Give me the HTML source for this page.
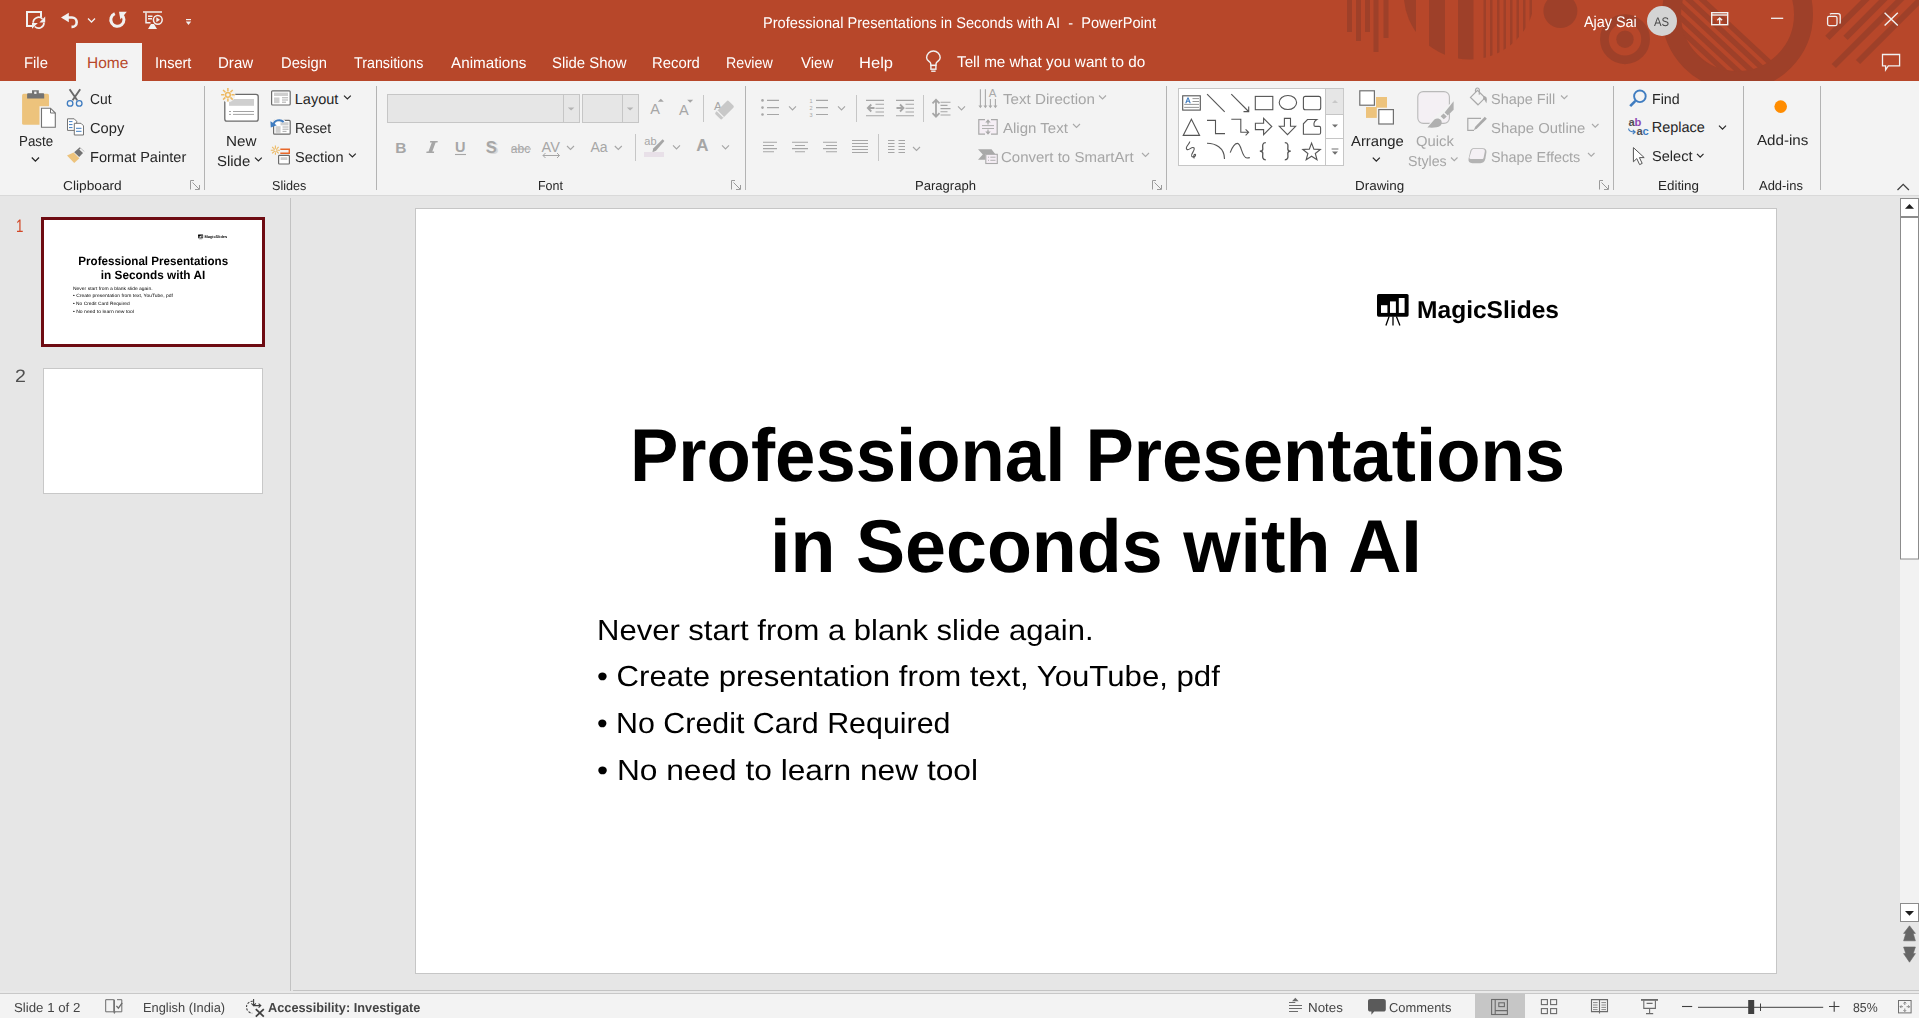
<!DOCTYPE html>
<html><head><meta charset="utf-8"><style>
html,body{margin:0;padding:0;width:1919px;height:1018px;overflow:hidden;background:#E6E6E6;font-family:"Liberation Sans",sans-serif;}
.t{position:absolute;white-space:pre;transform-origin:0 0;text-rendering:geometricPrecision;}
.r{position:absolute;display:block;}
svg{overflow:visible}
</style></head><body>
<div class="r" style="left:0px;top:0px;width:1919px;height:81px;background:#B7472A;"></div>
<svg class="r" style="left:0;top:0" width="1919" height="81" viewBox="0 0 1919 81"><g fill="#9E4029"><rect x="1347" y="0" width="5" height="32"/><rect x="1356" y="0" width="5" height="41"/><rect x="1365" y="0" width="5" height="32"/><rect x="1373.5" y="0" width="5.0" height="52"/><rect x="1383.5" y="0" width="5.0" height="38"/><defs><clipPath id="c1"><circle cx="1469.5" cy="-6.3" r="65.8"/></clipPath><clipPath id="c2"><circle cx="1737.5" cy="14.5" r="57.5"/></clipPath><clipPath id="tb"><rect x="0" y="0" width="1919" height="81"/></clipPath></defs><g clip-path="url(#c1)"><rect x="1400" y="-80" width="16" height="160"/><rect x="1429" y="-80" width="16" height="160"/><rect x="1458" y="-80" width="15.5" height="160"/><rect x="1483.5" y="-80" width="2.5" height="160"/><rect x="1490" y="-80" width="2.5" height="160"/><rect x="1497" y="-80" width="2.5" height="160"/><rect x="1503.5" y="-80" width="2.5" height="160"/><rect x="1510" y="-80" width="2.5" height="160"/><rect x="1516.5" y="-80" width="2.5" height="160"/><rect x="1523" y="-80" width="2.5" height="160"/><rect x="1529.5" y="-80" width="2.5" height="160"/></g><circle cx="1560.4" cy="11" r="17"/><circle cx="1625" cy="39.2" r="20.6" fill="none" stroke="#9E4029" stroke-width="8.7"/><circle cx="1625" cy="39.2" r="8.7"/><g clip-path="url(#tb)"><circle cx="1737.5" cy="14.5" r="66" fill="none" stroke="#9E4029" stroke-width="19"/><g clip-path="url(#c2)"><line x1="1582.5" y1="-111.60000000000001" x2="1822.5" y2="111.60000000000001" stroke="#9E4029" stroke-width="5.3"/><line x1="1568.9" y1="-111.60000000000001" x2="1808.9" y2="111.60000000000001" stroke="#9E4029" stroke-width="5.3"/><line x1="1555.3" y1="-111.60000000000001" x2="1795.3" y2="111.60000000000001" stroke="#9E4029" stroke-width="5.3"/><line x1="1541.7" y1="-111.60000000000001" x2="1781.7" y2="111.60000000000001" stroke="#9E4029" stroke-width="5.3"/><line x1="1528.1" y1="-111.60000000000001" x2="1768.1" y2="111.60000000000001" stroke="#9E4029" stroke-width="5.3"/><line x1="1514.5" y1="-111.60000000000001" x2="1754.5" y2="111.60000000000001" stroke="#9E4029" stroke-width="5.3"/></g><line x1="1827.4" y1="37.9" x2="1875" y2="-9.7" stroke="#9E4029" stroke-width="6"/><line x1="1845.5" y1="37.9" x2="1893" y2="-9.7" stroke="#9E4029" stroke-width="6"/><line x1="1833.8" y1="66" x2="1910" y2="-10" stroke="#9E4029" stroke-width="6"/><line x1="1858" y1="62" x2="1930" y2="-10" stroke="#9E4029" stroke-width="6"/></g></g></svg>
<div class="t" style="left:763.06px;top:16.00px;font-size:15.5px;line-height:15.5px;color:#FFFFFF;transform:scaleX(0.9423);">Professional Presentations in Seconds with AI  -  PowerPoint</div>
<div class="t" style="left:1583.50px;top:15.00px;font-size:15.5px;line-height:15.5px;color:#FFFFFF;transform:scaleX(0.9286);">Ajay Sai</div>
<div class="r" style="left:1647px;top:6px;width:30px;height:30px;border-radius:50%;background:#D4D4D4"></div>
<div class="t" style="left:1654.00px;top:16.17px;font-size:12.5px;line-height:12.5px;color:#4A4A4A;transform:scaleX(0.9062);">AS</div>
<div class="t" style="left:24.04px;top:56.00px;font-size:15.5px;line-height:15.5px;color:#FFFFFF;transform:scaleX(0.9565);">File</div>
<div class="t" style="left:155.06px;top:56.00px;font-size:15.5px;line-height:15.5px;color:#FFFFFF;transform:scaleX(0.9395);">Insert</div>
<div class="t" style="left:218.43px;top:56.00px;font-size:15.5px;line-height:15.5px;color:#FFFFFF;transform:scaleX(0.9714);">Draw</div>
<div class="t" style="left:280.75px;top:56.00px;font-size:15.5px;line-height:15.5px;color:#FFFFFF;transform:scaleX(0.9511);">Design</div>
<div class="t" style="left:354.40px;top:56.00px;font-size:15.5px;line-height:15.5px;color:#FFFFFF;transform:scaleX(0.9213);">Transitions</div>
<div class="t" style="left:451.30px;top:56.00px;font-size:15.5px;line-height:15.5px;color:#FFFFFF;transform:scaleX(0.9829);">Animations</div>
<div class="t" style="left:552.04px;top:56.00px;font-size:15.5px;line-height:15.5px;color:#FFFFFF;transform:scaleX(0.9605);">Slide Show</div>
<div class="t" style="left:652.04px;top:56.00px;font-size:15.5px;line-height:15.5px;color:#FFFFFF;transform:scaleX(0.9583);">Record</div>
<div class="t" style="left:726.08px;top:56.00px;font-size:15.5px;line-height:15.5px;color:#FFFFFF;transform:scaleX(0.9200);">Review</div>
<div class="t" style="left:801.00px;top:56.00px;font-size:15.5px;line-height:15.5px;color:#FFFFFF;transform:scaleX(0.9697);">View</div>
<div class="t" style="left:858.93px;top:56.00px;font-size:15.5px;line-height:15.5px;color:#FFFFFF;transform:scaleX(1.0667);">Help</div>
<div class="r" style="left:76px;top:43px;width:66px;height:38px;background:#F3F3F3;"></div>
<div class="t" style="left:87.00px;top:56.00px;font-size:15.5px;line-height:15.5px;color:#B7472A;">Home</div>
<div class="t" style="left:957.00px;top:55.00px;font-size:15.5px;line-height:15.5px;color:#FFFFFF;transform:scaleX(0.9843);">Tell me what you want to do</div>
<div class="r" style="left:0px;top:81px;width:1919px;height:114px;background:#F3F3F3;"></div>
<div class="r" style="left:0px;top:195px;width:1919px;height:1px;background:#D9D9D9;"></div>
<div class="r" style="left:204px;top:86px;width:1px;height:104px;background:#B3B3B3;"></div>
<div class="r" style="left:376px;top:86px;width:1px;height:104px;background:#B3B3B3;"></div>
<div class="r" style="left:745px;top:86px;width:1px;height:104px;background:#B3B3B3;"></div>
<div class="r" style="left:1166px;top:86px;width:1px;height:104px;background:#B3B3B3;"></div>
<div class="r" style="left:1613px;top:86px;width:1px;height:104px;background:#B3B3B3;"></div>
<div class="r" style="left:1743px;top:86px;width:1px;height:104px;background:#B3B3B3;"></div>
<div class="r" style="left:1820px;top:86px;width:1px;height:104px;background:#B3B3B3;"></div>
<div class="t" style="left:62.54px;top:179.36px;font-size:13px;line-height:13px;color:#262626;transform:scaleX(1.0556);">Clipboard</div>
<div class="t" style="left:272.43px;top:179.36px;font-size:13px;line-height:13px;color:#262626;transform:scaleX(0.9706);">Slides</div>
<div class="t" style="left:537.64px;top:179.36px;font-size:13px;line-height:13px;color:#262626;transform:scaleX(0.9600);">Font</div>
<div class="t" style="left:914.80px;top:179.36px;font-size:13px;line-height:13px;color:#262626;transform:scaleX(1.0034);">Paragraph</div>
<div class="t" style="left:1355.27px;top:179.36px;font-size:13px;line-height:13px;color:#262626;transform:scaleX(1.0326);">Drawing</div>
<div class="t" style="left:1657.57px;top:179.36px;font-size:13px;line-height:13px;color:#262626;transform:scaleX(1.0316);">Editing</div>
<div class="t" style="left:1759.40px;top:179.36px;font-size:13px;line-height:13px;color:#262626;transform:scaleX(0.9955);">Add-ins</div>
<div class="t" style="left:18.78px;top:134.51px;font-size:14.5px;line-height:14.5px;color:#262626;transform:scaleX(0.9194);">Paste</div>
<div class="t" style="left:89.65px;top:93.11px;font-size:14.5px;line-height:14.5px;color:#262626;transform:scaleX(0.9545);">Cut</div>
<div class="t" style="left:89.59px;top:121.61px;font-size:14.5px;line-height:14.5px;color:#262626;transform:scaleX(1.0121);">Copy</div>
<div class="t" style="left:89.60px;top:150.51px;font-size:14.5px;line-height:14.5px;color:#262626;transform:scaleX(1.0042);">Format Painter</div>
<div class="t" style="left:225.55px;top:134.51px;font-size:14.5px;line-height:14.5px;color:#262626;transform:scaleX(1.0500);">New</div>
<div class="t" style="left:216.67px;top:154.61px;font-size:14.5px;line-height:14.5px;color:#262626;transform:scaleX(1.0290);">Slide</div>
<div class="t" style="left:294.80px;top:93.11px;font-size:14.5px;line-height:14.5px;color:#262626;">Layout</div>
<div class="t" style="left:294.85px;top:121.61px;font-size:14.5px;line-height:14.5px;color:#262626;transform:scaleX(0.9514);">Reset</div>
<div class="t" style="left:294.80px;top:150.51px;font-size:14.5px;line-height:14.5px;color:#262626;transform:scaleX(1.0043);">Section</div>
<div class="t" style="left:1002.50px;top:93.11px;font-size:14.5px;line-height:14.5px;color:#A6A6A6;transform:scaleX(1.0460);">Text Direction</div>
<div class="t" style="left:1002.50px;top:121.61px;font-size:14.5px;line-height:14.5px;color:#A6A6A6;transform:scaleX(1.0365);">Align Text</div>
<div class="t" style="left:1001.47px;top:150.51px;font-size:14.5px;line-height:14.5px;color:#A6A6A6;transform:scaleX(1.0346);">Convert to SmartArt</div>
<div class="t" style="left:1350.50px;top:134.81px;font-size:14.5px;line-height:14.5px;color:#262626;transform:scaleX(1.0235);">Arrange</div>
<div class="t" style="left:1415.58px;top:134.81px;font-size:14.5px;line-height:14.5px;color:#A6A6A6;transform:scaleX(1.0222);">Quick</div>
<div class="t" style="left:1407.62px;top:154.51px;font-size:14.5px;line-height:14.5px;color:#A6A6A6;transform:scaleX(0.9789);">Styles</div>
<div class="t" style="left:1490.70px;top:93.11px;font-size:14.5px;line-height:14.5px;color:#A6A6A6;transform:scaleX(0.9968);">Shape Fill</div>
<div class="t" style="left:1490.67px;top:121.61px;font-size:14.5px;line-height:14.5px;color:#A6A6A6;transform:scaleX(1.0256);">Shape Outline</div>
<div class="t" style="left:1490.71px;top:150.51px;font-size:14.5px;line-height:14.5px;color:#A6A6A6;transform:scaleX(0.9921);">Shape Effects</div>
<div class="t" style="left:1651.72px;top:92.91px;font-size:14.5px;line-height:14.5px;color:#262626;transform:scaleX(0.9815);">Find</div>
<div class="t" style="left:1651.70px;top:121.41px;font-size:14.5px;line-height:14.5px;color:#262626;">Replace</div>
<div class="t" style="left:1651.69px;top:150.41px;font-size:14.5px;line-height:14.5px;color:#262626;transform:scaleX(1.0077);">Select</div>
<div class="t" style="left:1756.50px;top:134.31px;font-size:14.5px;line-height:14.5px;color:#262626;transform:scaleX(1.0449);">Add-ins</div>
<div class="r" style="left:0px;top:196px;width:1919px;height:794px;background:#E6E6E6;"></div>
<div class="r" style="left:290px;top:198px;width:1px;height:793px;background:#C2C2C2;"></div>
<div class="t" style="left:15.96px;top:216.90px;font-size:18px;line-height:18px;color:#D24726;transform:scaleX(0.7375);">1</div>
<div class="t" style="left:14.51px;top:366.80px;font-size:18px;line-height:18px;color:#505050;transform:scaleX(1.0875);">2</div>
<div class="r" style="left:41px;top:217px;width:224px;height:130px;background:#6E0B12;"></div>
<div class="r" style="left:44px;top:220px;width:218px;height:124px;background:#FFFFFF;"></div>
<div class="r" style="left:44px;top:369px;width:218px;height:124px;background:#FFFFFF;box-shadow:0 0 0 1px #C8C8C8;"></div>
<div class="r" style="left:416px;top:209px;width:1360px;height:764px;background:#FFFFFF;box-shadow:0 0 0 1px #C6C6C6;"></div>
<div class="r" style="left:416px;top:209px;width:1360px;height:764px;overflow:hidden"><div class="t" style="left:213.76px;top:208.60px;font-size:75px;line-height:75px;color:#000000;font-weight:bold;transform:scaleX(0.9670);">Professional Presentations</div><div class="t" style="left:354.09px;top:300.40px;font-size:75px;line-height:75px;color:#000000;font-weight:bold;transform:scaleX(0.9817);">in Seconds with AI</div><div class="t" style="left:180.86px;top:408.00px;font-size:29px;line-height:29px;color:#000000;transform:scaleX(1.0696);">Never start from a blank slide again.</div><div class="t" style="left:180.93px;top:454.20px;font-size:29px;line-height:29px;color:#000000;transform:scaleX(1.0743);">• Create presentation from text, YouTube, pdf</div><div class="t" style="left:180.95px;top:501.20px;font-size:29px;line-height:29px;color:#000000;transform:scaleX(1.0478);">• No Credit Card Required</div><div class="t" style="left:180.91px;top:548.30px;font-size:29px;line-height:29px;color:#000000;transform:scaleX(1.0925);">• No need to learn new tool</div><div class="t" style="left:1001.39px;top:90.20px;font-size:24.4px;line-height:24.4px;color:#000000;font-weight:bold;transform:scaleX(1.0072);">MagicSlides</div><svg class="r" style="left:960.5999999999999px;top:85.10000000000002px;overflow:visible" width="32" height="32" viewBox="0 0 32 32"><rect x="0" y="0" width="31.6" height="22.7" rx="1.6" fill="#000"/><rect x="4" y="11.2" width="6.4" height="7.7" fill="#fff"/><rect x="13" y="7.4" width="5.9" height="11.5" fill="#fff"/><rect x="21.8" y="4" width="5.8" height="14.9" fill="#fff"/><path d="M12.1 22.5L8.9 31.5M16 22.5V31.5M19.4 22.5L22.9 31.5" stroke="#000" stroke-width="1.3" fill="none"/></svg></div>
<div class="r" style="left:44px;top:221px;width:1360px;height:764px;overflow:hidden;transform:scale(0.16029);transform-origin:0 0"><div class="t" style="left:213.76px;top:208.60px;font-size:75px;line-height:75px;color:#000000;font-weight:bold;transform:scaleX(0.9670);">Professional Presentations</div><div class="t" style="left:354.09px;top:300.40px;font-size:75px;line-height:75px;color:#000000;font-weight:bold;transform:scaleX(0.9817);">in Seconds with AI</div><div class="t" style="left:180.86px;top:408.00px;font-size:29px;line-height:29px;color:#000000;transform:scaleX(1.0696);">Never start from a blank slide again.</div><div class="t" style="left:180.93px;top:454.20px;font-size:29px;line-height:29px;color:#000000;transform:scaleX(1.0743);">• Create presentation from text, YouTube, pdf</div><div class="t" style="left:180.95px;top:501.20px;font-size:29px;line-height:29px;color:#000000;transform:scaleX(1.0478);">• No Credit Card Required</div><div class="t" style="left:180.91px;top:548.30px;font-size:29px;line-height:29px;color:#000000;transform:scaleX(1.0925);">• No need to learn new tool</div><div class="t" style="left:1001.39px;top:90.20px;font-size:24.4px;line-height:24.4px;color:#000000;font-weight:bold;transform:scaleX(1.0072);">MagicSlides</div><svg class="r" style="left:960.5999999999999px;top:85.10000000000002px;overflow:visible" width="32" height="32" viewBox="0 0 32 32"><rect x="0" y="0" width="31.6" height="22.7" rx="1.6" fill="#000"/><rect x="4" y="11.2" width="6.4" height="7.7" fill="#fff"/><rect x="13" y="7.4" width="5.9" height="11.5" fill="#fff"/><rect x="21.8" y="4" width="5.8" height="14.9" fill="#fff"/><path d="M12.1 22.5L8.9 31.5M16 22.5V31.5M19.4 22.5L22.9 31.5" stroke="#000" stroke-width="1.3" fill="none"/></svg></div>
<div class="r" style="left:1900px;top:198px;width:19px;height:724px;background:#F2F2F2;"></div>
<div class="r" style="left:0px;top:991px;width:1919px;height:2px;background:#E9E9E9;"></div>
<div class="r" style="left:293px;top:990px;width:1626px;height:1px;background:#C4C4C4;"></div>
<div class="r" style="left:0px;top:993px;width:1919px;height:1px;background:#C8C8C8;"></div>
<div class="r" style="left:0px;top:994px;width:1919px;height:24px;background:#F3F3F3;"></div>
<div class="t" style="left:14.18px;top:1000.76px;font-size:13px;line-height:13px;color:#444444;transform:scaleX(1.0203);">Slide 1 of 2</div>
<div class="t" style="left:143.31px;top:1000.76px;font-size:13px;line-height:13px;color:#444444;transform:scaleX(0.9877);">English (India)</div>
<div class="t" style="left:268.00px;top:1000.60px;font-size:13px;line-height:13px;color:#444444;font-weight:bold;transform:scaleX(0.9806);">Accessibility: Investigate</div>
<div class="t" style="left:1307.57px;top:1001.16px;font-size:13px;line-height:13px;color:#444444;transform:scaleX(1.0273);">Notes</div>
<div class="t" style="left:1388.81px;top:1001.16px;font-size:13px;line-height:13px;color:#444444;transform:scaleX(0.9918);">Comments</div>
<div class="r" style="left:1475px;top:994px;width:50px;height:24px;background:#C6C6C6;"></div>
<div class="t" style="left:1853.35px;top:1000.86px;font-size:13px;line-height:13px;color:#444444;transform:scaleX(0.9480);">85%</div>
<svg class="r" style="left:0;top:0" width="1919" height="1018" viewBox="0 0 1919 1018"><g fill="none" stroke="#F1F1F1" stroke-width="2"><path d="M32 26H27V12H41V17"/></g><g fill="none" stroke="#F1F1F1" stroke-width="1.7"><path d="M33.20 22.70A5.4 5.4 0 0 1 42.42 18.88"/><path d="M44.00 22.70A5.4 5.4 0 0 1 34.78 26.52"/></g><g fill="#F1F1F1"><path d="M45.2 16.6V22.4H39.4Z"/><path d="M32 28.8V23H37.8Z"/></g><g fill="none" stroke="#F1F1F1" stroke-width="2.6"><path d="M63.5 17.5H72A4.7 4.7 0 0 1 72 26.9H71.5"/></g><path fill="#F1F1F1" d="M61 17.5L68.8 12.8V22.2Z"/><path fill="none" stroke="#F1F1F1" stroke-width="1.3" d="M88 18.5L91.5 22L95 18.5"/><path fill="none" stroke="#F1F1F1" stroke-width="3" d="M114.8 13.6A6.6 6.6 0 1 0 121.6 14.6"/><path fill="#F1F1F1" d="M119 11.8H126.8L120.4 19.6Z"/><g fill="none" stroke="#F1F1F1" stroke-width="1.5"><path d="M143 12H162"/><path d="M146 12.5V22.8H150.5"/><path d="M148 16.3H152.5M148 18.8H152"/><circle cx="157.8" cy="19.8" r="4.4"/></g><g fill="#F1F1F1"><path d="M156.3 17.3V22.3L160 19.8Z"/><path d="M148 29H157L154 24H151Z"/></g><g fill="#F1F1F1"><rect x="186" y="19" width="5" height="1.2"/><path d="M185.8 21.6H191.2L188.5 25Z"/></g><g fill="none" stroke="#F1F1F1" stroke-width="1.4"><rect x="1711.7" y="12.7" width="16" height="12"/><path d="M1712 15H1727.5"/><path d="M1719.7 24.5V18M1717.3 20.3L1719.7 17.9L1722.1 20.3"/></g><path stroke="#F1F1F1" stroke-width="1.3" d="M1771 18.3H1783.2"/><g fill="none" stroke="#F1F1F1" stroke-width="1.3"><rect x="1827.6" y="16.4" width="9.4" height="9.2" rx="1.5"/><path d="M1830 14.2A1.8 1.8 0 0 1 1831.8 13.7H1838A2.2 2.2 0 0 1 1840.2 15.9V22A1.8 1.8 0 0 1 1839.6 23.6"/></g><path stroke="#F1F1F1" stroke-width="1.4" d="M1884.6 12.7L1897.8 25.6M1897.8 12.7L1884.6 25.6"/><path fill="none" stroke="#F1F1F1" stroke-width="1.3" d="M1882.5 54.5H1899.6V65.8H1888.3L1885.6 69.8V65.8H1882.5Z"/><g fill="none" stroke="#F1F1F1" stroke-width="1.4"><path d="M930.9 65.4L930.6 63.2C930.2 61.6 926.6 60.6 926.6 57.8A6.8 6.8 0 0 1 940.2 57.8C940.2 60.6 936.6 61.6 936.2 63.2L935.9 65.4Z"/><rect x="930.9" y="65.4" width="5" height="3.8"/><path d="M931.2 71.2H935.6"/></g><rect x="22.1" y="93.8" width="26.9" height="31" rx="1.6" fill="#EDC37C"/><path fill="#737373" d="M27.1 98.5V94.3Q27.1 93.3 28.1 93.3H32V90.2H38.8V93.3H43.2Q44.2 93.3 44.2 94.3V98.5Z"/><rect x="34.2" y="91.6" width="2.3" height="2.3" fill="#F3F3F3"/><path fill="#F3F3F3" d="M39.5 106.2H51.2L57.3 112.3V129.2H39.5Z"/><path fill="#FFFFFF" stroke="#737373" stroke-width="1.1" d="M41.5 108.2H50.5L55.3 113V127.2H41.5Z"/><path fill="none" stroke="#737373" stroke-width="1" d="M50.5 108.2V113H55.3"/><path fill="none" stroke="#262626" stroke-width="1.3" d="M31.8 157.5L35.4 161.1L39.0 157.5"/><g fill="none" stroke="#6A6A6A" stroke-width="1.9"><path d="M69.6 89.3L77.2 100.2M80.2 89.3L72.6 100.2"/></g><g fill="none" stroke="#3F7CC0" stroke-width="1.3"><circle cx="70.1" cy="103.4" r="2.8"/><circle cx="79.2" cy="103.4" r="2.8"/></g><path fill="#FFFFFF" stroke="#737373" stroke-width="1" d="M67.5 118.8H74.2L76.7 121.3V130.4H67.5Z"/><path fill="#FFFFFF" stroke="#737373" stroke-width="1" d="M74.3 123.3H81L83.5 125.8V135H74.3Z"/><g stroke="#3F7CC0" stroke-width="1"><path d="M69 121.6H72.5M69 124.6H72.5M69 127.6H72.5M76 128.3H81.5M76 131.3H81.5"/></g><path fill="#EDC37C" d="M67 155.4L73.6 152.6L79.4 158.2L74.2 163Z"/><path fill="#737373" d="M74.2 152.2L79.8 147.2L84.4 151.6L79.2 157Z"/><path fill="#F3F3F3" d="M79.3 149.5L80.6 148.3L84.8 152.3L83.5 153.5Z"/><rect x="224.8" y="94.4" width="33.4" height="26.8" rx="2.2" fill="#FFFFFF" stroke="#6B6B6B" stroke-width="1.3"/><rect x="229" y="99" width="25" height="6.8" fill="#CFCFCF"/><g stroke="#A3A3A3" stroke-width="1"><path d="M229 111.5H231M233 111.5H254M229 114.4H231M233 114.4H254"/></g><circle cx="227.9" cy="94.8" r="7.5" fill="#F3F3F3"/><g stroke="#EDB961" fill="none"><path stroke-width="1.5" d="M231.50 94.80L234.70 94.80M230.45 97.35L232.71 99.61M227.90 98.40L227.90 101.60M225.35 97.35L223.09 99.61M224.30 94.80L221.10 94.80M225.35 92.25L223.09 89.99M227.90 91.20L227.90 88.00M230.45 92.25L232.71 89.99"/><circle cx="227.9" cy="94.8" r="2.4" stroke-width="1.5"/></g><path fill="none" stroke="#262626" stroke-width="1.2" d="M255 157.6L258.4 160.9L261.8 157.6"/><rect x="271.6" y="90.8" width="18.6" height="14.2" rx="1" fill="#FFFFFF" stroke="#6B6B6B" stroke-width="1.2"/><rect x="274" y="92.6" width="14" height="3.4" fill="#CFCFCF"/><rect x="274" y="97.4" width="5.5" height="5.8" fill="#CFCFCF"/><g stroke="#A3A3A3" stroke-width="0.9"><path d="M282 97.8H288M282 100H288M282 102.2H286"/></g><path fill="none" stroke="#262626" stroke-width="1.2" d="M344 95.6L347.4 98.89999999999999L350.8 95.6"/><rect x="273.6" y="120.4" width="16.6" height="13.8" rx="1" fill="#FFFFFF" stroke="#6B6B6B" stroke-width="1.2"/><rect x="280.5" y="122.2" width="8" height="3.2" fill="#CFCFCF"/><rect x="275.6" y="126.2" width="5" height="6.6" fill="#CFCFCF"/><g stroke="#A3A3A3" stroke-width="0.9"><path d="M282.5 127H288.5M282.5 129.2H288.5M282.5 131.4H286.5"/></g><path fill="none" stroke="#F3F3F3" stroke-width="3.6" d="M273.2 124.4A6 5 0 0 1 283.8 121.8"/><path fill="none" stroke="#3F7CC0" stroke-width="1.9" d="M273.6 124.6A5.6 4.6 0 0 1 283.6 122"/><path fill="#3F7CC0" d="M270.4 121.2L276.8 125.2L270.8 127.4Z"/><path fill="none" stroke="#262626" stroke-width="1.2" d="M349 153.6L352.4 156.9L355.8 153.6"/><g stroke="#EDB961" fill="none"><path stroke-width="1.1" d="M277.60 150.20L280.00 150.20M276.96 151.76L278.65 153.45M275.40 152.40L275.40 154.80M273.84 151.76L272.15 153.45M273.20 150.20L270.80 150.20M273.84 148.64L272.15 146.95M275.40 148.00L275.40 145.60M276.96 148.64L278.65 146.95"/><circle cx="275.4" cy="150.2" r="1.6" stroke-width="1"/></g><path fill="none" stroke="#E8682A" stroke-width="1.4" d="M280.3 149.3H289.3V153.2H280.3"/><rect x="278.6" y="155.4" width="10.8" height="8.6" rx="0.8" fill="#FFFFFF" stroke="#6B6B6B" stroke-width="1.2"/><rect x="280.6" y="157.2" width="6.8" height="2.8" fill="#CFCFCF"/><g fill="none" stroke="#9A9A9A" stroke-width="1"><path d="M190.5 189.5V180.5H194M192.5 182.5L199 189M199.5 185V189.5H195"/></g><g fill="none" stroke="#9A9A9A" stroke-width="1"><path d="M731.5 189.5V180.5H735M733.5 182.5L740 189M740.5 185V189.5H736"/></g><g fill="none" stroke="#9A9A9A" stroke-width="1"><path d="M1152.5 189.5V180.5H1156M1154.5 182.5L1161 189M1161.5 185V189.5H1157"/></g><g fill="none" stroke="#9A9A9A" stroke-width="1"><path d="M1599.5 189.5V180.5H1603M1601.5 182.5L1608 189M1608.5 185V189.5H1604"/></g><rect x="387.5" y="94.5" width="192" height="28" fill="#E6E6E6" stroke="#C6C6C6" stroke-width="1"/><path stroke="#C6C6C6" d="M563.5 95V122"/><rect x="582.5" y="94.5" width="56" height="28" fill="#E6E6E6" stroke="#C6C6C6" stroke-width="1"/><path stroke="#C6C6C6" d="M622.5 95V122"/><path fill="#B4B4B4" d="M567.8 107.6H574.4L571.1 110.6Z M626.8 107.6H633.4L630.1 110.6Z"/><text x="650.3" y="114" font-family="Liberation Sans" font-size="14.5" font-weight="normal" font-style="normal" fill="#A6A6A6" >A</text><path fill="#A6A6A6" d="M657.8 101.8L660.8 98.8L663.8 101.8Z"/><text x="679" y="115" font-family="Liberation Sans" font-size="14.5" font-weight="normal" font-style="normal" fill="#A6A6A6" >A</text><path fill="#A6A6A6" d="M687.2 99.8H693.2L690.2 102.8Z"/><path stroke="#C6C6C6" d="M703.5 95V122"/><text x="714" y="109.5" font-family="Liberation Sans" font-size="11.5" font-weight="normal" font-style="normal" fill="#A6A6A6" >A</text><g transform="rotate(45 724.5 110)"><rect x="719.8" y="100.6" width="9.4" height="18.8" rx="1.6" fill="#C8C8C8"/><rect x="719.8" y="115.2" width="9.4" height="1.2" fill="#F3F3F3"/></g><text x="395.2" y="152.8" font-family="Liberation Sans" font-size="15.5" font-weight="bold" font-style="normal" fill="#A6A6A6" >B</text><path fill="#A6A6A6" d="M430.2 141H437.8L437.5 142.6H435.6L432.3 151.4H434.2L433.9 153H426.3L426.6 151.4H428.5L431.8 142.6H429.9Z"/><text x="455" y="152" font-family="Liberation Sans" font-size="14.5" font-weight="bold" font-style="normal" fill="#A6A6A6" >U</text><path stroke="#A6A6A6" stroke-width="1.1" d="M455 154.5H466"/><text x="487.4" y="154.4" font-family="Liberation Sans" font-size="16.5" font-weight="bold" font-style="normal" fill="#D8D8D8" >S</text><text x="485.8" y="153" font-family="Liberation Sans" font-size="16.5" font-weight="bold" font-style="normal" fill="#A6A6A6" >S</text><text x="510.8" y="152.5" font-family="Liberation Sans" font-size="12" font-weight="normal" font-style="normal" fill="#A6A6A6" >abc</text><path stroke="#A6A6A6" stroke-width="1" d="M511 149H531"/><text x="541.6" y="151.6" font-family="Liberation Sans" font-size="14.5" font-weight="normal" font-style="normal" fill="#A6A6A6" >AV</text><path fill="none" stroke="#A6A6A6" stroke-width="1" d="M543 155.5H559.5M545.5 153L543 155.5L545.5 158M557 153L559.5 155.5L557 158"/><path fill="none" stroke="#A6A6A6" stroke-width="1.1" d="M567 146L570.5 149.5L574 146"/><text x="590.5" y="152" font-family="Liberation Sans" font-size="14" font-weight="normal" font-style="normal" fill="#A6A6A6" >Aa</text><path fill="none" stroke="#A6A6A6" stroke-width="1.1" d="M614.8 146L618.3 149.5L621.8 146"/><path stroke="#C6C6C6" d="M635.5 134V161"/><text x="644.3" y="145" font-family="Liberation Sans" font-size="11" font-weight="normal" font-style="normal" fill="#A6A6A6" >ab</text><path fill="#A6A6A6" d="M662.6 139.2L664.4 141L656 150.8L652.4 152.2L653.2 148.4Z"/><rect x="644" y="152" width="20" height="5" fill="#E8E0E8"/><path fill="none" stroke="#A6A6A6" stroke-width="1.1" d="M673 145.4L676.5 148.9L680 145.4"/><text x="696.2" y="151" font-family="Liberation Sans" font-size="17" font-weight="bold" font-style="normal" fill="#A6A6A6" >A</text><path fill="none" stroke="#A6A6A6" stroke-width="1.1" d="M722 145.4L725.5 148.9L729 145.4"/><circle cx="762.5" cy="100.4" r="1.3" fill="#A6A6A6"/><circle cx="762.5" cy="107.6" r="1.3" fill="#A6A6A6"/><circle cx="762.5" cy="114.5" r="1.3" fill="#A6A6A6"/><path fill="none" stroke="#A6A6A6" stroke-width="1.1" d="M767 100.4H779M767 107.6H779M767 114.5H779"/><path fill="none" stroke="#A6A6A6" stroke-width="1.1" d="M789 106.4L792.5 109.9L796 106.4"/><text x="809.5" y="103.3" font-family="Liberation Sans" font-size="5.5" font-weight="normal" font-style="normal" fill="#A6A6A6" >1</text><text x="809.5" y="110.3" font-family="Liberation Sans" font-size="5.5" font-weight="normal" font-style="normal" fill="#A6A6A6" >2</text><text x="809.5" y="117.3" font-family="Liberation Sans" font-size="5.5" font-weight="normal" font-style="normal" fill="#A6A6A6" >3</text><path fill="none" stroke="#A6A6A6" stroke-width="1.1" d="M816 100.4H828M816 107.6H828M816 114.5H828"/><path fill="none" stroke="#A6A6A6" stroke-width="1.1" d="M838 106.4L841.5 109.9L845 106.4"/><path stroke="#C6C6C6" d="M856.5 95V122"/><path fill="none" stroke="#A6A6A6" stroke-width="1.1" d="M866 100.4H884M866 115.8H884"/><path fill="none" stroke="#A6A6A6" stroke-width="1.1" d="M875.5 104.3H884.0M875.5 108.2H884.0M875.5 112H884.0"/><path fill="none" stroke="#A6A6A6" stroke-width="1.8" d="M867.5 108H874.5M871.3 104.5L867.8 108L871.3 111.5"/><path fill="none" stroke="#A6A6A6" stroke-width="1.1" d="M896 100.4H914M896 115.8H914"/><path fill="none" stroke="#A6A6A6" stroke-width="1.1" d="M905.5 104.3H914.0M905.5 108.2H914.0M905.5 112H914.0"/><path fill="none" stroke="#A6A6A6" stroke-width="1.8" d="M896.5 108H903.5M900 104.5L903.5 108L900 111.5"/><path stroke="#C6C6C6" d="M923.5 95V122"/><path fill="none" stroke="#A6A6A6" stroke-width="1.8" d="M936 100V116.5M932.5 103.3L936 99.8L939.5 103.3M932.5 113.2L936 116.7L939.5 113.2"/><path fill="none" stroke="#A6A6A6" stroke-width="1.1" d="M940.5 102.2H950.5M940.5 105.4H947.5M940.5 108.6H950.5M940.5 111.8H947.5M940.5 115H950.5"/><path fill="none" stroke="#A6A6A6" stroke-width="1.1" d="M958 106.4L961.5 109.9L965 106.4"/><path fill="none" stroke="#A6A6A6" stroke-width="1.1" d="M763 142.3H777M763 145.5H774M763 148.6H777M763 151.7H774"/><path fill="none" stroke="#A6A6A6" stroke-width="1.1" d="M792.0 142.3H808.0M795.0 145.5H805.0M792.0 148.6H808.0M795.0 151.7H805.0"/><path fill="none" stroke="#A6A6A6" stroke-width="1.1" d="M823 142.3H837M826 145.5H837M823 148.6H837M826 151.7H837"/><path fill="none" stroke="#A6A6A6" stroke-width="1.1" d="M852 140.5H868M852 143.5H868M852 146.5H868M852 149.5H868M852 152.5H868"/><path stroke="#C6C6C6" d="M878.5 134V161"/><path fill="none" stroke="#A6A6A6" stroke-width="1.1" d="M888 140.5H894.5M888 143.5H894.5M888 146.5H894.5M888 149.5H894.5M888 152.5H894.5"/><path fill="none" stroke="#A6A6A6" stroke-width="1.1" d="M898.5 140.5H905.0M898.5 143.5H905.0M898.5 146.5H905.0M898.5 149.5H905.0M898.5 152.5H905.0"/><path fill="none" stroke="#A6A6A6" stroke-width="1.1" d="M913 147L916.5 150.5L920 147"/><g fill="none" stroke="#A9A9A9" stroke-width="1.1"><path d="M980.4 89.2V107M985.4 89.2V107M990.4 99V107M995.4 99V107"/></g><g fill="#A9A9A9"><path d="M978.4 105.5H982.4L980.4 108.2Z M983.4 105.5H987.4L985.4 108.2Z M988.4 105.5H992.4L990.4 108.2Z M993.4 105.5H997.4L995.4 108.2Z"/></g><text x="988.8" y="97.3" font-family="Liberation Sans" font-size="11.5" font-weight="normal" font-style="normal" fill="#A9A9A9" >A</text><rect x="978.8" y="119.6" width="18.4" height="14.6" fill="#F5EEF5"/><g fill="none" stroke="#A9A9A9" stroke-width="1.2"><path d="M985 119.6H978.8V134.2H985M991 119.6H997.2V134.2H991"/><path d="M988 120V124.5M988 129.5V134"/><path d="M982 125.6H994M982 128.5H994" stroke-width="0.9"/></g><g fill="#A9A9A9"><path d="M985.3 122.6L988 119.3L990.7 122.6Z M985.3 131.4L988 134.7L990.7 131.4Z"/></g><path fill="#A9A9A9" d="M978 149.2H991.5L995.2 154H985.5V159.8H978L982.8 154.5Z"/><rect x="985.8" y="154.3" width="11.5" height="9.2" fill="#F5EEF5" stroke="#A9A9A9" stroke-width="1.1"/><g stroke="#A9A9A9" stroke-width="0.9"><path d="M988 157.2H989M990.3 157.2H995.5M988 160.3H989M990.3 160.3H995.5"/></g><path fill="none" stroke="#A9A9A9" stroke-width="1.1" d="M1099 95.5L1102.5 99.0L1106 95.5"/><path fill="none" stroke="#A9A9A9" stroke-width="1.1" d="M1073 124L1076.5 127.5L1080 124"/><path fill="none" stroke="#A9A9A9" stroke-width="1.1" d="M1142 153L1145.5 156.5L1149 153"/><rect x="1178.5" y="88.5" width="165" height="77" fill="#FFFFFF" stroke="#C6C6C6" stroke-width="1"/><rect x="1325.5" y="89" width="17.6" height="25.4" fill="#E6E6E6"/><path stroke="#C6C6C6" fill="none" d="M1325.5 89V165M1326 114.5H1343M1326 138.5H1343"/><path fill="#C8C8C8" d="M1332 103H1338L1335 100Z"/><path fill="#707070" d="M1332 124.6H1338L1335 127.6Z"/><path fill="#707070" d="M1331.6 148.4H1338.4V149.4H1331.6Z M1332 151.6H1338L1335 154.8Z"/><g fill="none" stroke="#555555" stroke-width="1.1"><rect x="1182.7" y="95.8" width="17.6" height="14.3"/><path d="M1192.5 98.6H1199M1192.5 101.5H1199M1184.2 104.4H1199M1184.2 107.4H1199" stroke="#8A8A8A" stroke-width="0.9"/><path d="M1207.1 94.1L1224.7 111.8"/><path d="M1231.3 94.1L1248.6 111.5M1243.5 111.6H1248.7V106.4"/><path d="M1191.4 119.2L1199.6 135.4H1183.2Z"/><path d="M1207 120.4H1215.5V133.6H1225"/><path d="M1231.3 119.2H1240.8V132.3H1248.6M1245.6 129.3L1248.6 132.3L1245.6 135.3"/><path d="M1189.8 141.5C1189.4 144.5 1184.6 147 1186.8 149.3C1188.8 151.2 1191.5 146.2 1193.8 147.8C1196 149.6 1190.6 153.8 1191.6 156C1192.6 158 1196 156.4 1195.6 154.8C1195.2 153 1192.4 155.6 1194.4 158.4"/><path d="M1207 143.2C1215 143.2 1224.5 147.5 1224.5 159"/><path d="M1230.2 152.6C1232 147.8 1234.5 143.4 1237.5 143.4C1241.5 143.4 1241.6 158 1247 158C1248 158 1249 157.8 1249.8 157.6"/><rect x="1255.3" y="96.4" width="17.5" height="13.3"/><ellipse cx="1287.9" cy="102.5" rx="8.7" ry="7"/><rect x="1303.4" y="96.4" width="17.3" height="13.3" rx="2"/><path d="M1255.4 123.3H1263.6V118.4L1271.8 126.5L1263.6 134.6V129.6H1255.4Z"/><path d="M1284.4 118.4H1290.5V126.3H1295.6L1287.5 134.6L1279.3 126.3H1284.4Z"/><path d="M1303.4 134.3V123.8L1307.5 119.5H1316.8C1314.5 121 1314 121.5 1314 123.2V125.2C1314 126 1314.4 126.4 1315.4 126.4H1319.2C1320.2 126.4 1320.6 126.8 1320.6 127.8V132.8C1320.6 133.8 1320 134.3 1319.2 134.3Z"/></g><path fill="none" stroke="#555555" stroke-width="1.3" d="M1265.8 142.6C1261.6 142.6 1262.8 147 1262.8 149C1262.8 150.6 1261.8 151.2 1259.8 151.2C1261.8 151.2 1262.8 151.8 1262.8 153.4C1262.8 155.4 1261.6 159.8 1265.8 159.8"/><path fill="none" stroke="#555555" stroke-width="1.3" d="M1284.8 142.6C1289 142.6 1287.8 147 1287.8 149C1287.8 150.6 1288.8 151.2 1290.8 151.2C1288.8 151.2 1287.8 151.8 1287.8 153.4C1287.8 155.4 1289 159.8 1284.8 159.8"/><polygon points="1311.60,143.10 1313.89,149.14 1320.35,149.46 1315.31,153.51 1317.01,159.74 1311.60,156.20 1306.19,159.74 1307.89,153.51 1302.85,149.46 1309.31,149.14" fill="none" stroke="#555555" stroke-width="1.1"/><path fill="#3F7CC0" d="M1185.2 103.2L1187.4 97.4H1188.6L1190.8 103.2H1189.5L1189 101.7H1187L1186.5 103.2Z M1187.3 100.7H1188.7L1188 98.7Z"/><rect x="1376" y="97" width="11" height="10.7" fill="#EDC37C"/><rect x="1366" y="107" width="10.8" height="10.9" fill="#EDC37C"/><rect x="1359.8" y="90.8" width="14.6" height="14.4" fill="#FFFFFF" stroke="#707070" stroke-width="1.2"/><rect x="1378.8" y="109.6" width="14.6" height="14.4" fill="#FFFFFF" stroke="#707070" stroke-width="1.2"/><path fill="none" stroke="#262626" stroke-width="1.3" d="M1372.8 157.6L1376.3 161.1L1379.8 157.6"/><rect x="1417.8" y="91.6" width="31.6" height="31.8" rx="5.5" fill="#F4F0F4" stroke="#B9B9B9" stroke-width="1.1"/><path fill="#F3F3F3" d="M1425 129L1437 114.5L1456 99L1455 108L1441 122Z"/><g fill="#B0B0B0"><path d="M1453.6 101.2V109.8L1447.8 115.4L1444.6 112.4Z"/><path d="M1443.6 113.4L1446.8 116.4L1443.8 119.2L1440.6 116.2Z"/><path d="M1427.4 127.6L1434.4 119.6C1436.4 117.8 1439.6 118.4 1441 120C1442.2 121.6 1442 124.4 1440.4 125.8C1437.6 128 1433 127.6 1427.4 127.6Z"/></g><path fill="none" stroke="#A9A9A9" stroke-width="1.1" d="M1451 157.5L1454.25 160.7L1457.5 157.5"/><g fill="none" stroke="#A9A9A9" stroke-width="1.2"><path d="M1470.5 97.4L1477.5 90.4L1485 97.8L1478 104.8Z"/><path d="M1475.6 92.2C1475 89.6 1476 88 1477.6 88C1479.2 88 1479.8 89.6 1479.2 94.6"/></g><path fill="#A9A9A9" d="M1483.6 96.2C1486.8 95.8 1487.6 98.6 1486.4 103.2C1485.2 101.4 1484.8 99.4 1483 98.4Z"/><path fill="none" stroke="#A9A9A9" stroke-width="1.1" d="M1561 95.5L1564.25 98.7L1567.5 95.5"/><g fill="none" stroke="#A9A9A9" stroke-width="1.2"><path d="M1481 118.3H1467.8V130.3H1474"/></g><path fill="#A9A9A9" d="M1484.8 116.8L1486.8 118.8L1477 128.6L1473.8 130.2L1475.2 126.8Z"/><path fill="none" stroke="#A9A9A9" stroke-width="1.1" d="M1592 124L1595.25 127.2L1598.5 124"/><path fill="#B3B3B3" d="M1470.5 150.6C1471.4 148.8 1472.2 148.2 1474 148.2H1482.6C1485.6 148.2 1486.8 150 1486.4 152.6L1485.4 158.6C1484.8 161.6 1483.2 163.2 1480.4 163.2H1472.4C1469.4 163.2 1468 161.6 1468.6 158.6Z"/><path fill="#F4F0F4" d="M1471.6 150.4C1472 149.4 1472.8 148.9 1474 148.9H1482.4C1484.4 148.9 1485.2 150 1484.8 151.8L1483.6 157.8C1483.4 158.6 1483 159 1482 159H1470.6C1469.8 159 1469.2 158.6 1469.4 157.6Z"/><path fill="none" stroke="#A9A9A9" stroke-width="1.1" d="M1588 153L1591.25 156.2L1594.5 153"/><g fill="none" stroke="#3F7CC0"><circle cx="1639.9" cy="96.3" r="5.8" stroke-width="1.9"/><path d="M1635.4 100.9L1630.2 106.2" stroke-width="2.6"/></g><text x="1628.4" y="126.3" font-family="Liberation Sans" font-size="11.2" font-weight="bold" font-style="normal" fill="#505050" >a</text><text x="1634.6" y="126.3" font-family="Liberation Sans" font-size="11.2" font-weight="bold" font-style="normal" fill="#8E4AB4" >b</text><text x="1636.4" y="135.3" font-family="Liberation Sans" font-size="11.2" font-weight="bold" font-style="normal" fill="#505050" >a</text><text x="1642.6" y="135.3" font-family="Liberation Sans" font-size="11.2" font-weight="bold" font-style="normal" fill="#3F7CC0" >c</text><path fill="none" stroke="#3F7CC0" stroke-width="1.1" d="M1628.6 128.6C1628.6 131 1630 132 1635 132M1632.8 129.8L1635.2 132L1632.8 134.2"/><path fill="#FFFFFF" stroke="#555555" stroke-width="1" d="M1633.4 147.6V161.8L1636.8 158.6L1639.6 164.6L1642.2 163.4L1639.4 157.6H1644.2Z"/><path fill="none" stroke="#262626" stroke-width="1.2" d="M1719 125.6L1722.5 129.1L1726 125.6"/><path fill="none" stroke="#262626" stroke-width="1.2" d="M1697 153.8L1700.25 157.10000000000002L1703.5 153.8"/><circle cx="1780.7" cy="106.6" r="6.3" fill="#FF8C00" style="filter:blur(0.4px)"/><path fill="none" stroke="#404040" stroke-width="1.3" d="M1897.5 190L1903.2 184.3L1908.9 190"/><rect x="1900.5" y="198.5" width="18" height="18" fill="#FFFFFF" stroke="#8C8C8C" stroke-width="1"/><rect x="1900.5" y="217.5" width="18" height="341.5" fill="#FFFFFF" stroke="#8C8C8C" stroke-width="1"/><path fill="#1E1E1E" d="M1905 208.8H1914L1909.5 204Z"/><rect x="1900.5" y="903.5" width="18" height="18" fill="#FFFFFF" stroke="#8C8C8C" stroke-width="1"/><path fill="#1E1E1E" d="M1905 911H1914L1909.5 915.8Z"/><path fill="#666666" d="M1909.5 925.8L1915.4 933.4H1913.2L1915.4 940.8H1903.6L1905.8 933.4H1903.6Z M1903.6 947H1915.4L1913.2 953.6H1915.4L1909.5 962.2L1903.6 953.6H1905.8Z" stroke="#666666" stroke-width="0.6" stroke-linejoin="round"/><g fill="none" stroke="#6B6B6B" stroke-width="1"><path d="M105.7 999.7H113.8V1011.8H105.7Z M113.8 1011.8L114.4 1013.4L115 1011.8 M114.4 999.7V1011.8 M117 999.7H121.8V1011.8H114.4"/><path d="M116.4 1005.8L118.4 1008.2L122.2 1002.8" stroke-width="1.3"/></g><g fill="none" stroke="#404040" stroke-width="1.1"><path d="M252.8 1001.2A6 6 0 0 0 252.2 1013.2" stroke-dasharray="2.2 1.4"/><path d="M253.6 999V1005.6H260.6M251.4 1003.4L253.6 1005.8L255.8 1003.4M258.6 1003.6L260.8 1005.6L258.6 1007.6"/><path d="M255.8 1009.2L263.8 1016.6M263.8 1009.2L255.8 1016.6" stroke-width="1.8"/></g><g fill="none" stroke="#6B6B6B" stroke-width="1"><path d="M1289 1002.5L1295.3 1002.5M1289 1005.5H1302M1289 1008.5H1302M1289 1011.5H1298"/></g><path fill="#6B6B6B" d="M1292 1001.2L1295.3 997.8L1298.6 1001.2Z"/><path fill="#5A5A5A" d="M1368 1001.4C1368 999.8 1368.8 999 1370.4 999H1383.4C1385 999 1385.8 999.8 1385.8 1001.4V1009.2C1385.8 1010.8 1385 1011.6 1383.4 1011.6H1374.2L1371.4 1014.8V1011.6H1370.4C1368.8 1011.6 1368 1010.8 1368 1009.2Z"/><g fill="none" stroke="#6B6B6B" stroke-width="1.1"><rect x="1491.6" y="999.5" width="15.8" height="15"/><path d="M1495.2 999.8V1014.3M1495.4 1010.6H1507.2"/><rect x="1498.8" y="1002.8" width="5.6" height="3.8"/></g><path fill="#D4D4D4" d="M1496 1000.2H1506.8V1010H1496Z" opacity="0.0"/><g fill="none" stroke="#6B6B6B" stroke-width="1.1"><rect x="1541.4" y="999.6" width="6" height="5"/><rect x="1550.6" y="999.6" width="6" height="5"/><rect x="1541.4" y="1008.6" width="6" height="5"/><rect x="1550.6" y="1008.6" width="6" height="5"/></g><g fill="none" stroke="#6B6B6B" stroke-width="1.1"><path d="M1591.5 999.6H1599.5V1011.6H1591.5Z M1599.5 999.6H1607.5V1011.6H1599.5 M1599.5 1011.6V1013.6"/><path d="M1593 1002.6H1597.6M1593 1005H1597.6M1593 1007.4H1597.6M1593 1009.6H1597.6M1601.4 1002.6H1606M1601.4 1005H1606M1601.4 1007.4H1606M1601.4 1009.6H1606" stroke-width="0.8"/></g><g fill="none" stroke="#6B6B6B" stroke-width="1.1"><path d="M1641 999.9H1658" stroke-width="1.8"/><path d="M1643.8 1000.6V1008.4H1655.4V1000.6M1649.6 1008.4V1013.4M1646 1013.6H1653.2M1646.6 1003.4H1652.6"/></g><g stroke="#404040" fill="none"><path d="M1682 1006.5H1692.2" stroke-width="1.1"/><path d="M1698 1007.3H1823.2" stroke-width="1"/><path d="M1760.5 1003.5V1011" stroke-width="1"/><path d="M1829 1006.5H1839.4M1834.2 1001.4V1011.8" stroke-width="1.1"/></g><rect x="1748.2" y="1000" width="6" height="14" fill="#404040"/><g fill="none" stroke="#707070" stroke-width="1"><rect x="1898.5" y="1000.5" width="12.6" height="12.4"/><path d="M1904.8 1002V1005M1903.4 1003.4L1904.8 1002L1906.2 1003.4M1904.8 1011.5V1008.5M1903.4 1010.1L1904.8 1011.5L1906.2 1010.1M1900 1006.7H1903M1901.4 1005.3L1900 1006.7L1901.4 1008.1M1909.6 1006.7H1906.6M1908.2 1005.3L1909.6 1006.7L1908.2 1008.1" stroke-width="0.8"/></g></svg>
</body></html>
